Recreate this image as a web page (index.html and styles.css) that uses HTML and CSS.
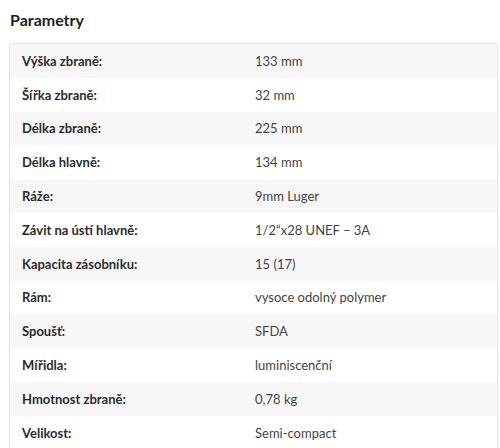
FILE: index.html
```html
<!DOCTYPE html>
<html lang="cs">
<head>
<meta charset="utf-8">
<link rel="stylesheet" href="styles.css">
</head>
<body>
<section class="params">
  <h2 class="params-title">Parametry</h2>
  <div class="params-table">
    <div class="row"><div class="label">Výška zbraně:</div><div class="value">133 mm</div></div>
    <div class="row"><div class="label">Šířka zbraně:</div><div class="value">32 mm</div></div>
    <div class="row"><div class="label">Délka zbraně:</div><div class="value">225 mm</div></div>
    <div class="row"><div class="label">Délka hlavně:</div><div class="value">134 mm</div></div>
    <div class="row"><div class="label">Ráže:</div><div class="value">9mm Luger</div></div>
    <div class="row"><div class="label">Závit na ústí hlavně:</div><div class="value">1/2“x28 UNEF – 3A</div></div>
    <div class="row"><div class="label">Kapacita zásobníku:</div><div class="value">15 (17)</div></div>
    <div class="row"><div class="label">Rám:</div><div class="value">vysoce odolný polymer</div></div>
    <div class="row"><div class="label">Spoušť:</div><div class="value">SFDA</div></div>
    <div class="row"><div class="label">Mířidla:</div><div class="value">luminiscenční</div></div>
    <div class="row"><div class="label">Hmotnost zbraně:</div><div class="value">0,78 kg</div></div>
    <div class="row"><div class="label">Velikost:</div><div class="value">Semi-compact</div></div>
  </div>
</section>
</body>
</html>
```
FILE: styles.css
```css
html, body {
  margin: 0;
  padding: 0;
  background: #fff;
}
body {
  font-family: Lato, "Noto Sans", sans-serif;
  color: #333;
}
.params {
  padding: 9px 2px 0 9px;
}
.params-title {
  margin: 0 0 12px 1px;
  font-size: 16px;
  font-weight: 700;
  line-height: 22px;
  color: #1e1e1e;
}
.params-table {
  border: 1px solid #e6e6e6;
  border-radius: 3px;
  box-shadow: 0 1px 2px rgba(0,0,0,0.05);
  overflow: hidden;
}
.row {
  display: grid;
  grid-template-columns: 245px 1fr;
  height: 33.8px;
  align-items: center;
  font-size: 13px;
}
.row:nth-child(odd) {
  background: #f7f7f7;
}
.label {
  padding-left: 12px;
  font-weight: 700;
  color: #2b2b2b;
}
.value {
  color: #444;
}
```
